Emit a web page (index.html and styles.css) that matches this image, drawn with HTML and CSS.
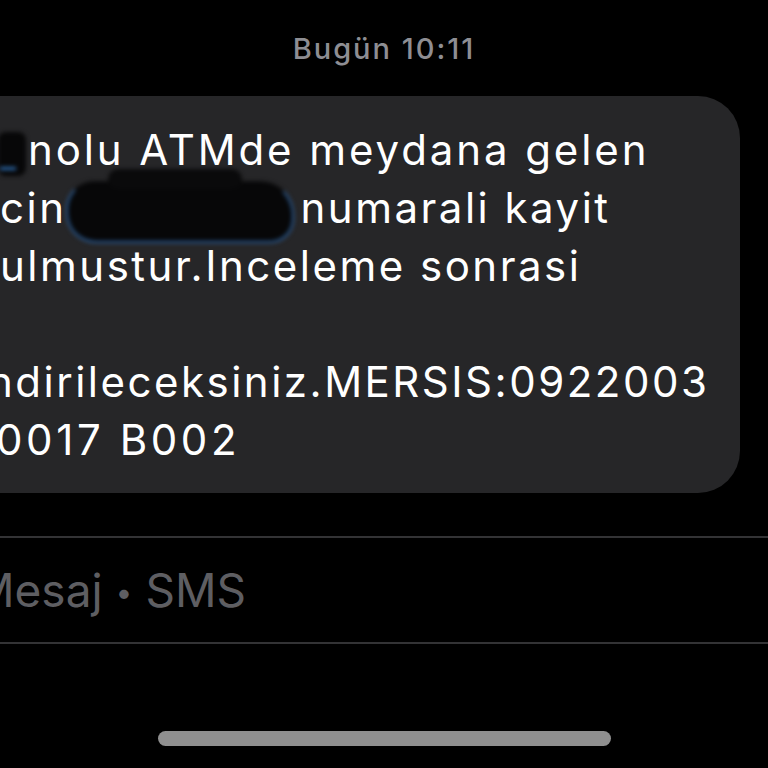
FILE: index.html
```html
<!DOCTYPE html>
<html lang="tr">
<head>
    <meta charset="UTF-8">
    <meta name="viewport" content="width=device-width, initial-scale=1.0">
    <title>Mesajlar</title>
    <link rel="stylesheet" href="styles.css">
</head>
<body>
    <div class="screen">
        <div class="stamp">Bugün 10:11</div>
        <div class="thread">
            <div class="bubble">
                <div class="line line-1"><span class="smudge smudge-small"></span>nolu ATMde meydana gelen</div>
                <div class="line line-2">cin<span class="smudge smudge-wide"></span>numarali kayit</div>
                <div class="line line-3">ulmustur.Inceleme sonrasi</div>
                <div class="line line-4">&nbsp;</div>
                <div class="line line-5">ndirileceksiniz.MERSIS:0922003</div>
                <div class="line line-6">0017 B002</div>
            </div>
        </div>
        <div class="composer">
            <span class="placeholder">Mesaj <span class="dot">•</span> SMS</span>
        </div>
        <div class="home-area">
            <div class="home-bar"></div>
        </div>
    </div>
</body>
</html>
```

FILE: styles.css
```css
body {
    margin: 0;
    background: #000;
    font-family: 'Inter', 'Liberation Sans', sans-serif;
    overflow: hidden;
}
.screen {
    width: 768px;
    height: 768px;
    display: flex;
    flex-direction: column;
    overflow: hidden;
}
.stamp {
    text-align: center;
    color: #8e8e93;
    font-size: 29px;
    font-weight: 500;
    letter-spacing: 2px;
    line-height: 36px;
    padding-top: 31px;
    height: 65px;
    box-sizing: border-box;
}
.thread {
    padding-top: 31px;
    display: flex;
    justify-content: flex-end;
    padding-right: 28px;
}
.bubble {
    background: #262628;
    border-radius: 42px;
    margin-left: -60px;
    width: 800px;
    padding: 25px 0 24px 60px;
    box-sizing: border-box;
    color: #fff;
    font-size: 42px;
    letter-spacing: 2.5px;
    line-height: 58px;
    white-space: nowrap;
}
.line-1 {
    margin-left: 2px;
    letter-spacing: 2.9px;
}
.line-5 {
    margin-left: -12px;
}
.line-6 {
    margin-left: -4px;
    letter-spacing: 3.6px;
}
.smudge {
    display: inline-block;
    vertical-align: middle;
    background: #070708;
    filter: blur(2px);
    position: relative;
}
.smudge-small {
    width: 28px;
    height: 44px;
    margin: -20px 2px -20px -4px;
    border-radius: 8px;
}
.smudge-small::after {
    content: '';
    position: absolute;
    left: 2px;
    bottom: 6px;
    width: 16px;
    height: 3px;
    background: #2f6fb4;
}
.smudge-wide {
    width: 224px;
    height: 58px;
    margin: -24px 6px -24px 0;
    border-radius: 28px 34px 24px 30px;
    border: 2px solid #2a5f9c;
    border-top-color: #0b0b0c;
}
.smudge-wide::before {
    content: '';
    position: absolute;
    left: 40px;
    right: 50px;
    top: -14px;
    height: 20px;
    background: #0a0a0b;
    border-radius: 10px;
}
.composer {
    margin-top: 43px;
    border-top: 2px solid #333335;
    border-bottom: 2px solid #333335;
    height: 104px;
    display: flex;
    align-items: center;
}
.placeholder {
    color: #5e5e62;
    font-size: 46px;
    margin-left: -27px;
}
.dot {
    font-size: 30px;
    vertical-align: 4px;
}
.home-area {
    flex: 1;
    display: flex;
    justify-content: center;
    padding-top: 87px;
}
.home-bar {
    width: 453px;
    height: 15px;
    border-radius: 8px;
    background: #8f8f8f;
}
```
